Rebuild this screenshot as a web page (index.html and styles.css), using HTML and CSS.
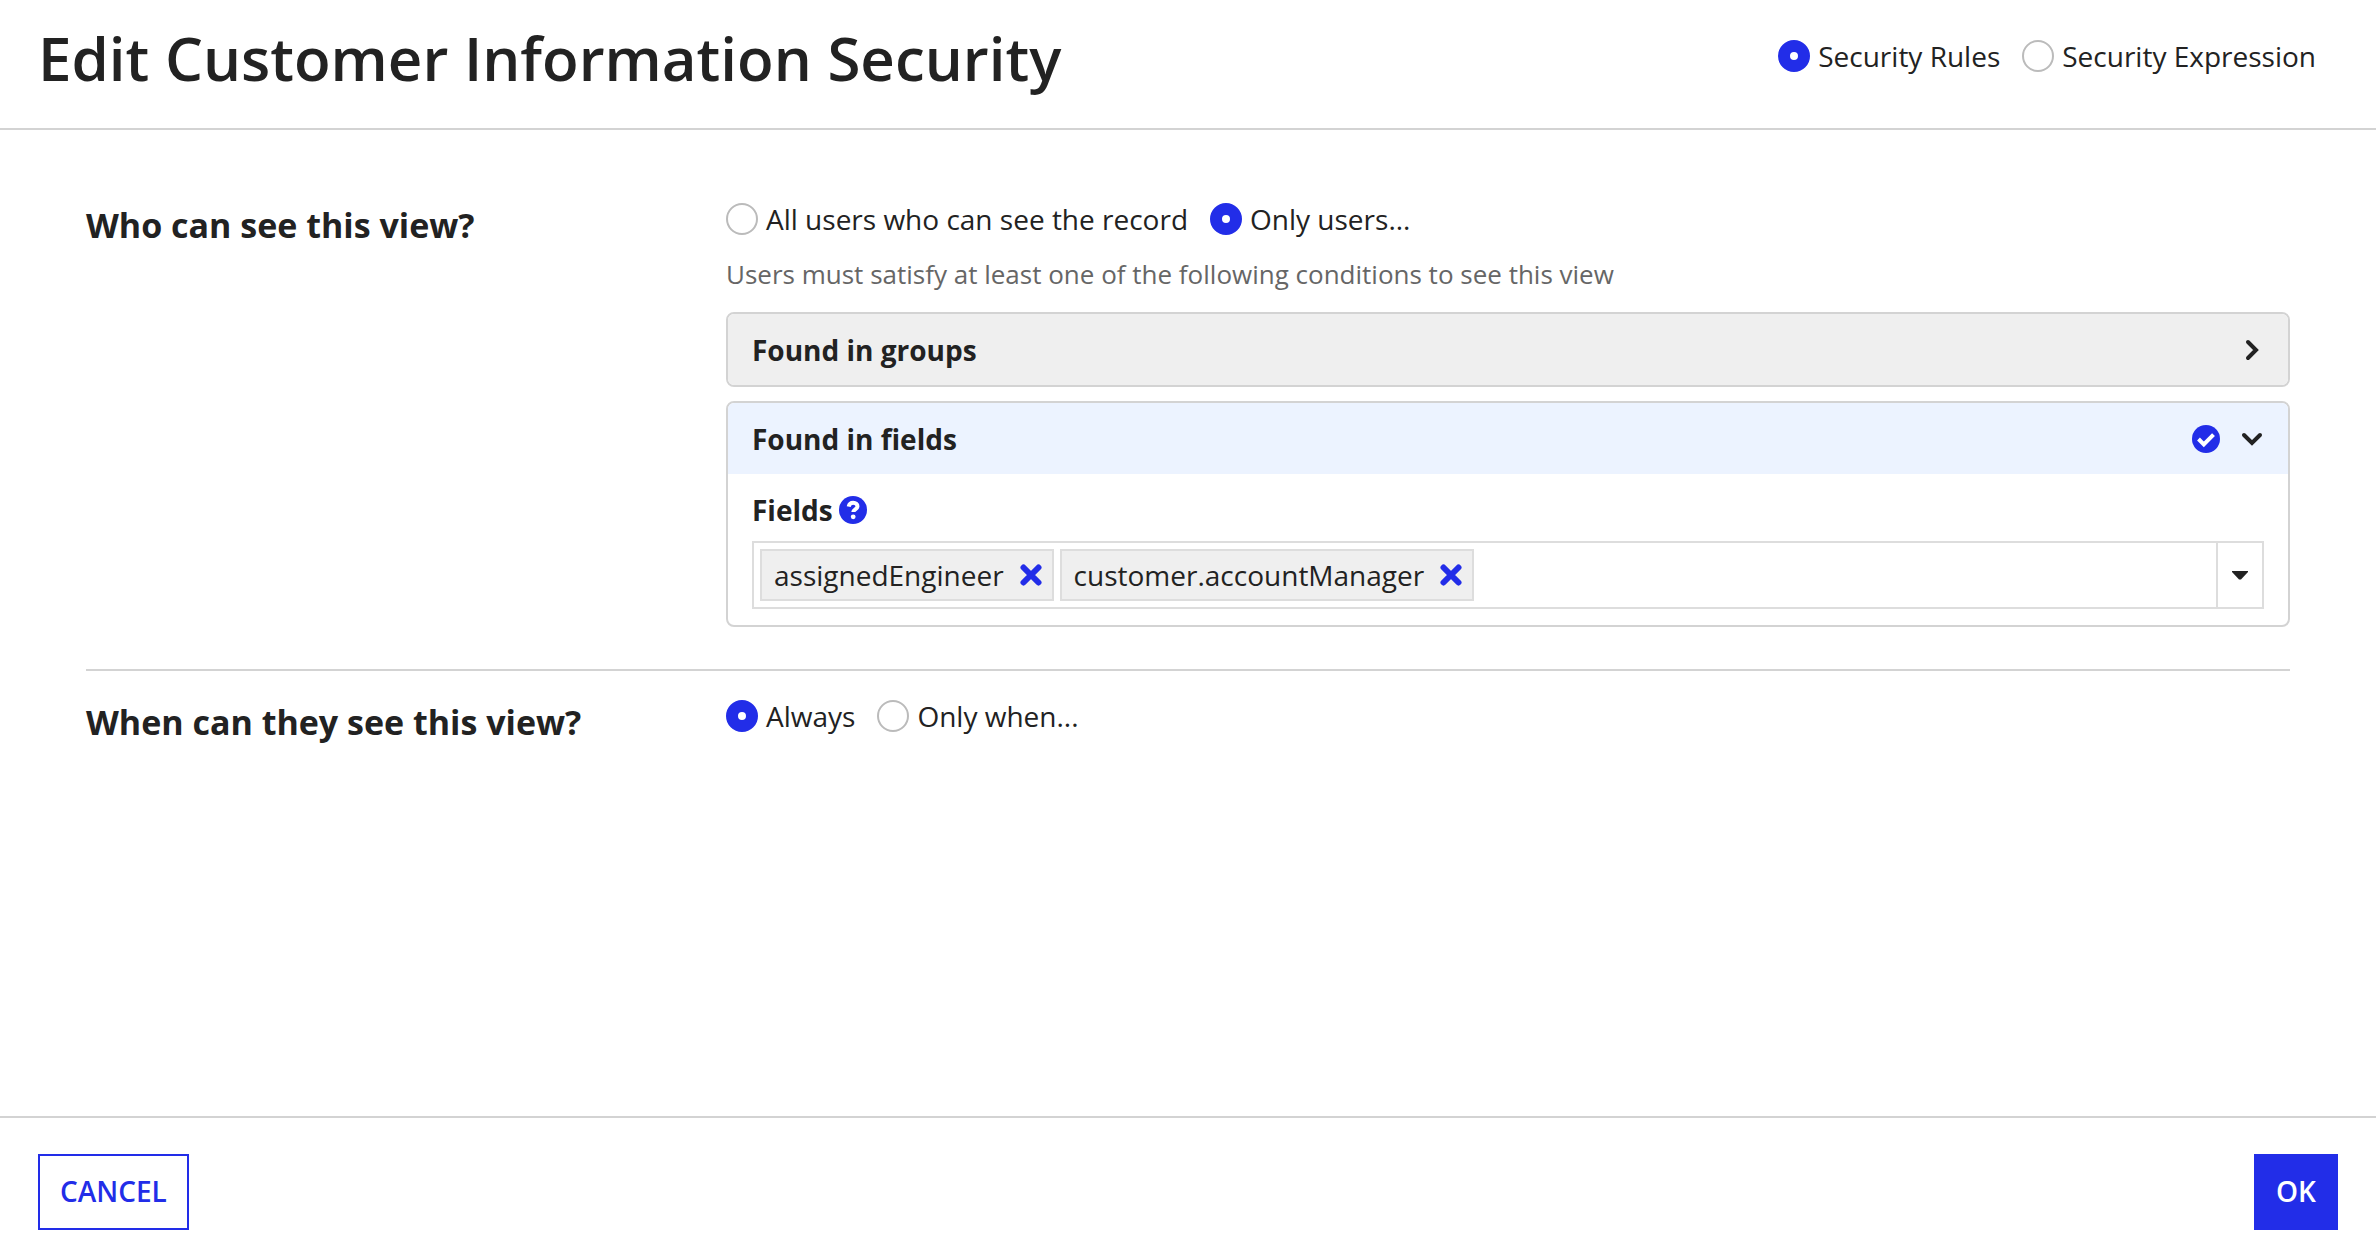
FILE: index.html
```html
<!DOCTYPE html>
<html lang="en">
<head>
<meta charset="utf-8">
<meta name="viewport" content="width=device-width, initial-scale=1">
<title>Edit Customer Information Security</title>
<link rel="stylesheet" href="styles.css">
</head>
<body>
<form class="dialog">
  <header class="dialog-header">
    <h1 class="title">Edit Customer Information Security</h1>
    <div class="radios" role="radiogroup" aria-label="Security mode">
      <label class="radio"><input type="radio" name="mode" checked><span>Security Rules</span></label>
      <label class="radio"><input type="radio" name="mode"><span>Security Expression</span></label>
    </div>
  </header>

  <main class="content">
    <section class="row">
      <h2 class="question">Who can see this view?</h2>
      <div class="answer">
        <div class="radios" role="radiogroup" aria-label="Who can see this view?">
          <label class="radio"><input type="radio" name="who"><span>All users who can see the record</span></label>
          <label class="radio"><input type="radio" name="who" checked><span>Only users...</span></label>
        </div>
        <p class="hint">Users must satisfy at least one of the following conditions to see this view</p>
        <div class="panel">
          <button type="button" class="panel-header" aria-expanded="false">
            <span class="panel-title">Found in groups</span>
            <svg class="chevron" viewBox="0 0 28 28" aria-hidden="true"><path d="M10 6l8 8-8 8"/></svg>
          </button>
        </div>
        <div class="panel">
          <button type="button" class="panel-header open" aria-expanded="true">
            <span class="panel-title">Found in fields</span>
            <svg class="icon" viewBox="0 0 28 28" aria-hidden="true"><circle cx="14" cy="14" r="14"/><path class="tick" d="M6.500 14l5.300 5.300L21.500 9.600"/></svg>
            <svg class="chevron" viewBox="0 0 28 28" aria-hidden="true"><path d="M6 10l8 8 8-8"/></svg>
          </button>
          <div class="panel-body">
            <div class="field-label">
              <label for="fields">Fields</label>
              <button type="button" class="help" aria-label="Help"><svg class="icon" viewBox="0 0 28 28" aria-hidden="true"><circle cx="14" cy="14" r="14"/><path class="question-mark" d="M9.700 10.600c.5-2.600 2.200-3.900 4.500-3.900 2.600 0 4.300 1.600 4.300 3.600 0 3-4.200 3-4.200 5.700"/><circle class="dot" cx="14.200" cy="20.800" r="2.400"/></svg></button>
            </div>
            <div class="picker">
              <div class="chips">
                <span class="chip">assignedEngineer<button type="button" class="remove" aria-label="Remove assignedEngineer"><svg viewBox="0 0 22 22" aria-hidden="true"><path d="M3.500 3.500l15 15M18.500 3.500l-15 15"/></svg></button></span>
                <span class="chip">customer.accountManager<button type="button" class="remove" aria-label="Remove customer.accountManager"><svg viewBox="0 0 22 22" aria-hidden="true"><path d="M3.500 3.500l15 15M18.500 3.500l-15 15"/></svg></button></span>
                <input class="entry" id="fields" type="text">
              </div>
              <button type="button" class="trigger" aria-label="Show fields"><svg viewBox="0 0 16 9" aria-hidden="true"><path d="M0 0h16v1L9 8.500H7L0 1z"/></svg></button>
            </div>
          </div>
        </div>
      </div>
    </section>

    <section class="row">
      <h2 class="question">When can they see this view?</h2>
      <div class="answer">
        <div class="radios" role="radiogroup" aria-label="When can they see this view?">
          <label class="radio"><input type="radio" name="when" checked><span>Always</span></label>
          <label class="radio"><input type="radio" name="when"><span>Only when...</span></label>
        </div>
      </div>
    </section>
  </main>

  <footer class="dialog-footer">
    <button type="button" class="button">CANCEL</button>
    <button type="submit" class="button primary">OK</button>
  </footer>
</form>
</body>
</html>
```
FILE: styles.css
```css
:root {
  --accent: #222de8;
  --text: #222;
  --line: #d3d3d3;
}

* {
  box-sizing: border-box;
}

body {
  margin: 0;
  background: #fff;
  color: var(--text);
  font: 28px/40px "Open Sans", sans-serif;
}

h1, h2, p {
  margin: 0;
}

button, input {
  font: inherit;
  color: inherit;
}

button {
  cursor: pointer;
}

svg {
  display: block;
  flex: none;
}

.dialog {
  display: flex;
  flex-direction: column;
  min-height: 100vh;
}

.dialog-header {
  display: flex;
  justify-content: space-between;
  align-items: flex-start;
  padding: 18px 60px 30px 38px;
  border-bottom: 2px solid var(--line);
}

.title {
  font-size: 60px;
  line-height: 80px;
  font-weight: 600;
}

.dialog-header .radios {
  padding-top: 18px;
}

.radios {
  display: flex;
  flex-wrap: wrap;
  column-gap: 22px;
}

.radio {
  display: flex;
  align-items: center;
  gap: 8px;
}

.radio input {
  appearance: none;
  flex: none;
  width: 32px;
  height: 32px;
  margin: 0;
  border: 2px solid #bbb;
  border-radius: 50%;
  background: #fff;
}

.radio input:checked {
  border: 12px solid var(--accent);
}

.content {
  flex: 1;
  padding: 69px 86px 40px;
}

.row {
  display: grid;
  grid-template-columns: 640px minmax(0, 1fr);
}

.row + .row {
  margin-top: 42px;
  padding-top: 25px;
  border-top: 2px solid var(--line);
}

.question {
  padding-top: 2px;
  font-size: 34px;
  line-height: 48px;
  font-weight: 700;
}

.hint {
  margin: 15px 0 18px;
  color: #666;
  font-size: 26px;
  line-height: 40px;
}

.panel {
  overflow: hidden;
  border: 2px solid var(--line);
  border-radius: 8px;
}

.panel + .panel {
  margin-top: 14px;
}

.panel-header {
  display: flex;
  align-items: center;
  gap: 18px;
  width: 100%;
  height: 71px;
  padding: 0 22px 0 24px;
  border: 0;
  background: #efefef;
  text-align: left;
}

.panel-header.open {
  background: #ecf3ff;
}

.panel-title {
  flex: 1;
  font-weight: 700;
}

.chevron {
  width: 28px;
  height: 28px;
  fill: none;
  stroke: var(--text);
  stroke-width: 4;
  stroke-linecap: round;
}

.icon {
  width: 28px;
  height: 28px;
  fill: var(--accent);
}

.tick, .question-mark {
  fill: none;
  stroke: #fff;
  stroke-width: 4;
}

.dot {
  fill: #fff;
}

.panel-body {
  padding: 16px 24px;
}

.field-label {
  display: flex;
  align-items: center;
  gap: 6px;
  margin-bottom: 11px;
  font-weight: 700;
}

.help, .remove {
  padding: 0;
  border: 0;
  background: none;
}

.picker {
  display: flex;
  border: 2px solid #ddd;
}

.chips {
  display: flex;
  flex: 1;
  flex-wrap: wrap;
  gap: 6px;
  min-width: 0;
  padding: 6px;
}

.chip {
  display: flex;
  align-items: center;
  gap: 16px;
  height: 52px;
  padding: 0 10px 0 12px;
  border: 2px solid #ddd;
  background: #efefef;
}

.remove svg {
  width: 22px;
  height: 22px;
  stroke: var(--accent);
  stroke-width: 6;
  stroke-linecap: round;
}

.entry {
  flex: 1;
  min-width: 40px;
  padding: 0;
  border: 0;
  outline: 0;
  background: none;
}

.trigger {
  display: flex;
  align-items: center;
  justify-content: center;
  width: 46px;
  padding: 0;
  border: 0;
  border-left: 2px solid #ddd;
  background: none;
}

.trigger svg {
  width: 16px;
  height: 9px;
  fill: var(--text);
}

.dialog-footer {
  display: flex;
  justify-content: space-between;
  padding: 36px 38px 20px;
  border-top: 2px solid var(--line);
}

.button {
  height: 76px;
  padding: 0 20px 2px;
  border: 2px solid var(--accent);
  background: #fff;
  color: var(--accent);
  font-weight: 600;
}

.button.primary {
  background: var(--accent);
  color: #fff;
}
```
